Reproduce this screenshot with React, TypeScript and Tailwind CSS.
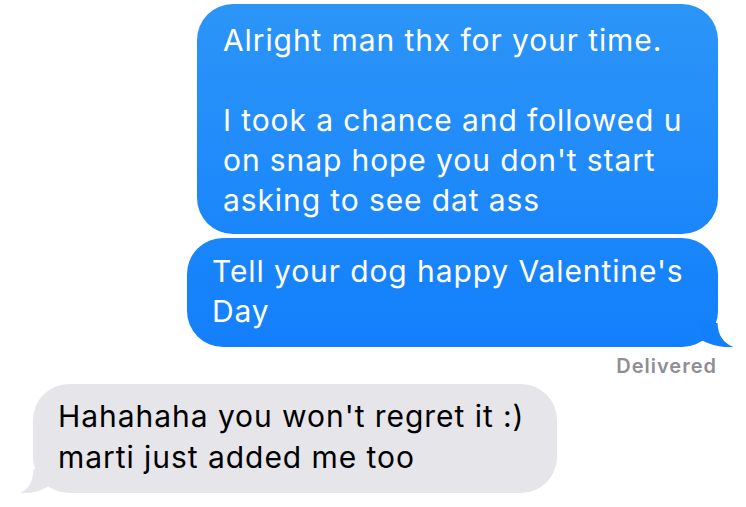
import React from "react";

const font = { fontFamily: "Inter, 'Helvetica Neue', Arial, sans-serif" };

function RightTail() {
  return (
    <svg
      className="absolute right-[-20px] bottom-0"
      width="40"
      height="30"
      viewBox="0 0 40 30"
    >
      <path
        d="M19.5 6 C20 19 26 26.5 35.5 30 C28 31 15 29 4 23.5 L4 6 Z"
        fill="#137ffb"
      />
    </svg>
  );
}

function LeftTail() {
  return (
    <svg
      className="absolute left-[-20px] bottom-0"
      width="40"
      height="30"
      viewBox="0 0 40 30"
    >
      <path
        d="M20.5 6 C20 19 16 26.5 7 30 C14 31 26 29 35 23.5 L35 6 Z"
        fill="#e5e5ea"
      />
    </svg>
  );
}

export default function App() {
  return (
    <div
      className="w-[746px] h-[507px] bg-white overflow-hidden flex flex-col"
      style={font}
    >
      <div className="flex flex-col items-end pr-[28px] pt-[4px] gap-[4px]">
        <div className="w-[521px] h-[230px] rounded-[36px] bg-gradient-to-b from-[#2c95f8] to-[#1a86fb] text-white text-[30px] leading-[40px] pl-[26px] pt-[16px] tracking-[0.9px] whitespace-nowrap">
          <div>Alright man thx for your time.</div>
          <div>&nbsp;</div>
          <div>I took a chance and followed u</div>
          <div>on snap hope you don't start</div>
          <div>asking to see dat ass</div>
        </div>
        <div className="relative w-[531px] h-[109px] rounded-[36px] bg-gradient-to-b from-[#1a86fb] to-[#137ffb] text-white text-[30px] leading-[40px] pl-[25px] pt-[13px] tracking-[0.9px] whitespace-nowrap">
          <div className="relative z-10">Tell your dog happy Valentine's</div>
          <div className="relative z-10">Day</div>
          <RightTail />
        </div>
        <div className="text-[#8e8e93] text-[20px] font-semibold leading-[24px] pr-[1px] mt-[3px] tracking-[1px]">
          Delivered
        </div>
      </div>
      <div className="flex pl-[33px] mt-[6px]">
        <div className="relative w-[524px] h-[109px] rounded-[36px] bg-[#e5e5ea] text-black text-[30px] leading-[41px] pl-[25px] pt-[12px] tracking-[0.95px] whitespace-nowrap">
          <div className="relative z-10">Hahahaha you won't regret it :)</div>
          <div className="relative z-10">marti just added me too</div>
          <LeftTail />
        </div>
      </div>
    </div>
  );
}
